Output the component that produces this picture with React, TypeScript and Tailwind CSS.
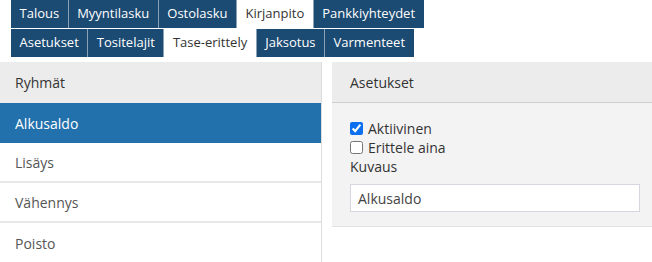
import React from "react";

const row1 = [
  { t: "Talous" },
  { t: "Myyntilasku" },
  { t: "Ostolasku" },
  { t: "Kirjanpito", active: true },
  { t: "Pankkiyhteydet" },
];
const row2 = [
  { t: "Asetukset" },
  { t: "Tositelajit" },
  { t: "Tase-erittely", active: true },
  { t: "Jaksotus" },
  { t: "Varmenteet" },
];

function TabRow({ tabs }: { tabs: { t: string; active?: boolean }[] }) {
  return (
    <div className="flex h-[28px] pl-[11px]">
      {tabs.map((tab, i) => (
        <div
          key={tab.t}
          className={
            "flex items-center px-[8.5px] pb-[1px] text-[13px] leading-none " +
            (tab.active
              ? "bg-white text-[#333]"
              : "bg-[#1b4a72] text-white") +
            (i < tabs.length - 1 ? " border-r border-[#8aa1b6]" : "")
          }
        >
          {tab.t}
        </div>
      ))}
    </div>
  );
}

export default function App() {
  return (
    <div
      className="w-[652px] h-[262px] overflow-hidden bg-white text-[#333]"
      style={{ fontFamily: '"Open Sans", sans-serif' }}
    >
      <div className="flex flex-col gap-[1px]">
        <TabRow tabs={row1} />
        <TabRow tabs={row2} />
      </div>
      <div className="grid grid-cols-[322px_1fr] gap-[10px] mt-[5px]">
        <div className="border-r border-[#dcdcdc] text-[14px]">
          <div className="h-[41px] bg-[#ececec] flex items-center pl-[15px]">Ryhmät</div>
          <div className="h-[40px] bg-[#2271ac] text-white flex items-center pl-[15px]">Alkusaldo</div>
          <div className="h-[40px] border-b-2 border-[#e8e8e8] flex items-center pl-[15px] text-[#555]">Lisäys</div>
          <div className="h-[40px] border-b-2 border-[#e8e8e8] flex items-center pl-[15px] text-[#555]">Vähennys</div>
          <div className="h-[40px] flex items-center pl-[15px] text-[#555]">Poisto</div>
        </div>
        <div className="self-start bg-[#f3f3f3] border-b border-[#e2e2e2] h-[165px] text-[14px]">
          <div className="h-[41px] bg-[#ececec] border-b border-[#cfcfcf] flex items-center pl-[18px]">Asetukset</div>
          <div className="pt-[16px] pl-[18px] pr-[12px]">
            <label className="flex items-center gap-[5px] h-[19px]">
              <input type="checkbox" defaultChecked className="w-[13px] h-[13px] m-0 accent-[#0b6ff0]" />
              <span>Aktiivinen</span>
            </label>
            <label className="flex items-center gap-[5px] h-[19px]">
              <input type="checkbox" className="w-[13px] h-[13px] m-0" />
              <span>Erittele aina</span>
            </label>
            <div className="h-[19px] flex items-center">Kuvaus</div>
            <div className="mt-[8px] h-[28px] bg-white border border-[#d6d6de] flex items-center pl-[7px] text-[#444]">
              Alkusaldo
            </div>
          </div>
        </div>
      </div>
    </div>
  );
}
